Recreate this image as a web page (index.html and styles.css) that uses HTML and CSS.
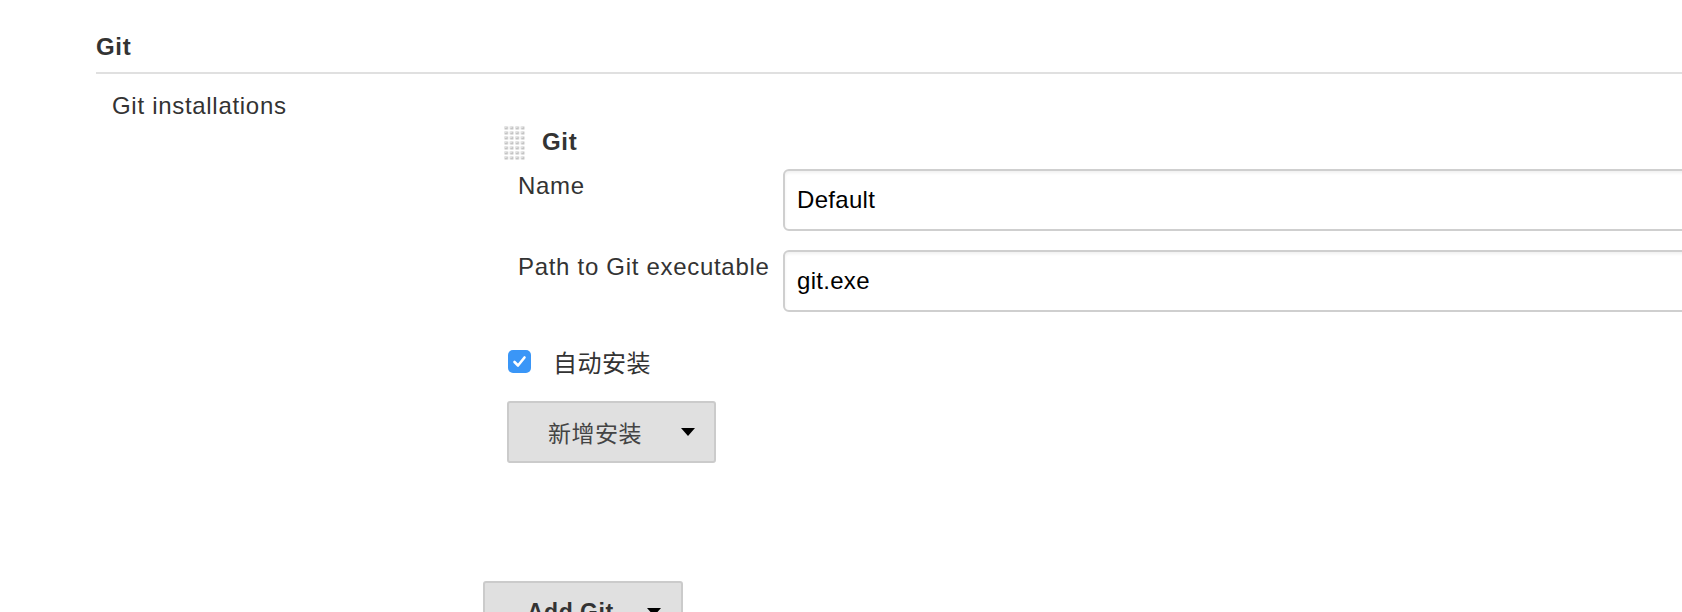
FILE: index.html
```html
<!DOCTYPE html>
<html>
<head>
<meta charset="utf-8">
<link rel="stylesheet" href="styles.css">
</head>
<body>
<div class="section">
  <div class="section-header">Git</div>
  <div class="row">
    <div class="row-label">Git installations</div>
    <div class="row-content">
      <div class="chunk">
        <div class="chunk-head">
          <svg class="grip" width="22" height="35" viewBox="0 0 22 35">
            <defs>
              <pattern id="dots" x="0" y="0" width="5.5" height="5" patternUnits="userSpaceOnUse">
                <rect x="0.5" y="0.5" width="3.5" height="3" fill="#c4c4c4"/>
                <rect x="0.5" y="0.5" width="2" height="1.5" fill="#e2e2e2"/>
              </pattern>
            </defs>
            <rect x="0" y="0" width="22" height="35" fill="url(#dots)"/>
          </svg>
          <span class="chunk-title">Git</span>
        </div>
        <div class="field">
          <div class="field-label">Name</div>
          <div class="field-input">Default</div>
        </div>
        <div class="field">
          <div class="field-label">Path to Git executable</div>
          <div class="field-input">git.exe</div>
        </div>
        <div class="check-row">
          <span class="checkbox">
            <svg width="23" height="23" viewBox="0 0 23 23"><path d="M6.5 12 L10 15.5 L16.5 7.5" fill="none" stroke="#fff" stroke-width="2.6" stroke-linecap="round" stroke-linejoin="round"/></svg>
          </span>
          <span class="check-text">自动安装</span>
        </div>
        <div class="dd-btn add-install">
          <span class="dd-text">新增安装</span>
          <span class="caret"></span>
        </div>
      </div>
      <div class="dd-btn add-git">
        <span class="dd-text bold">Add Git</span>
        <span class="caret"></span>
      </div>
    </div>
  </div>
</div>
</body>
</html>
```

FILE: styles.css
```css
html, body {
  margin: 0;
  padding: 0;
  overflow: hidden;
  background: #fff;
}
body {
  width: 1682px;
  height: 612px;
  font-family: "Liberation Sans", Arial, "Noto Sans CJK SC", sans-serif;
  color: #333;
  font-size: 24px;
  letter-spacing: 0.7px;
}
.section {
  padding-left: 96px;
  padding-top: 33px;
  width: 1700px;
}
.section-header {
  font-weight: bold;
  line-height: 28px;
  padding-bottom: 11px;
  border-bottom: 2px solid #e0e0e0;
}
.row {
  display: flex;
  margin-top: 18px;
}
.row-label {
  width: 371px;
  padding-left: 16px;
  line-height: 28px;
  flex: none;
}
.row-content {
  flex: 1;
  padding-top: 34px;
}
.chunk {
  padding-left: 21px;
}
.chunk-head {
  display: flex;
  align-items: flex-start;
  height: 35px;
  margin-bottom: 8px;
}
.grip {
  display: block;
  flex: none;
}
.chunk-title {
  font-weight: bold;
  line-height: 28px;
  margin-top: 2px;
  margin-left: 16px;
}
.field {
  display: flex;
  align-items: flex-start;
  margin-bottom: 19px;
}
.field-label {
  width: 265px;
  padding-left: 14px;
  padding-top: 3px;
  line-height: 28px;
  flex: none;
  white-space: nowrap;
}
.field-input {
  width: 1000px;
  height: 62px;
  box-sizing: border-box;
  flex: none;
  border: 2px solid #cfcfcf;
  border-radius: 6px;
  box-shadow: inset 0 2px 3px rgba(0, 0, 0, 0.06);
  padding-left: 12px;
  line-height: 58px;
  color: #000;
  letter-spacing: 0.3px;
}
.check-row {
  display: flex;
  align-items: center;
  margin-top: 38px;
  margin-left: 4px;
  height: 23px;
}
.checkbox {
  width: 23px;
  height: 23px;
  border-radius: 5px;
  background: #3a96f7;
  display: block;
  flex: none;
}
.checkbox svg {
  display: block;
}
.check-text {
  margin-left: 22px;
  font-family: "Noto Sans CJK SC", sans-serif;
  font-size: 24px;
  letter-spacing: 0.5px;
  color: #333;
  line-height: 23px;
}
.dd-btn {
  display: flex;
  align-items: center;
  height: 62px;
  box-sizing: border-box;
  background: #e0e0e0;
  border: 2px solid #cbcbcb;
  border-radius: 3px;
}
.add-install {
  width: 209px;
  margin-top: 28px;
  margin-left: 3px;
  padding: 0 19px 0 39px;
}
.add-git {
  width: 200px;
  margin-top: 118px;
  padding: 0 20px 0 42px;
}
.dd-text {
  font-family: "Noto Sans CJK SC", sans-serif;
  font-size: 23px;
  letter-spacing: 0.5px;
  color: #444;
  line-height: 30px;
}
.dd-text.bold {
  font-family: "Liberation Sans", Arial, sans-serif;
  font-weight: bold;
  color: #333;
}
.caret {
  margin-left: auto;
  width: 0;
  height: 0;
  border-left: 7px solid transparent;
  border-right: 7px solid transparent;
  border-top: 8px solid #000;
}
```
